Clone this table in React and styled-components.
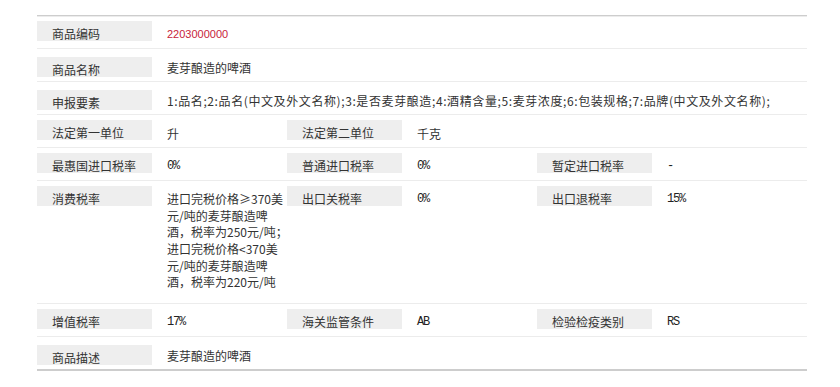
import React from 'react'
import styled, { createGlobalStyle, css } from 'styled-components'

const GlobalStyle = createGlobalStyle`
  body {
    margin: 0;
    background: #fff;
    font-family: "Noto Sans CJK SC", "Noto Sans", sans-serif;
    color: #333;
  }
`

const Page = styled.div`
  padding: 15px 0 0 37px;
`

const Table = styled.div`
  width: 770px;
  border-top: 1px solid #cdcdcd;
  border-bottom: 2px solid #cdcdcd;
  box-shadow: inset 0 1px 0 #ececec;
`

const Row = styled.div`
  display: grid;
  grid-template-columns: 115px 135px 115px 135px 115px 155px;
  align-items: start;
  min-height: 32px;
  & + & {
    border-top: 1px solid #ececec;
  }
`

// grey label chip; text sits a little below the middle of the chip
const Label = styled.div`
  box-sizing: border-box;
  height: 20px;
  margin-top: ${p => (p.$low ? 8 : 5)}px;
  padding: 6px 0 0 15px;
  background: #eeeeee;
  font-size: 12px;
  line-height: 14px;
  white-space: nowrap;
`

const Value = styled.div`
  padding: 10px 0 ${p => (p.$multi ? 12 : 0)}px 15px;
  font-size: 12px;
  line-height: ${p => (p.$multi ? '16.67px' : '17px')};
  white-space: nowrap;
  ${p => p.$span && css`grid-column: span ${p.$span};`}
  ${p => p.$wide && css`letter-spacing: 0.6px;`}
  ${p => p.$code && css`
    font-family: "Liberation Sans", Arial, sans-serif;
    font-size: 11px;
    color: #c8223a;
  `}
  ${p => p.$mono && css`
    font-family: "Liberation Mono", "Courier New", monospace;
    font-size: 12px;
    letter-spacing: -1.2px;
    color: #222;
  `}
`

const Line = styled.span`
  display: block;
`

const consumptionTax = [
  '进口完税价格≥370美',
  '元/吨的麦芽酿造啤',
  '酒，税率为250元/吨；',
  '进口完税价格<370美',
  '元/吨的麦芽酿造啤',
  '酒，税率为220元/吨',
]

export default function App() {
  return (
    <Page>
      <GlobalStyle />
      <Table>
        <Row>
          <Label>商品编码</Label>
          <Value $span={5} $code>2203000000</Value>
        </Row>
        <Row>
          <Label $low>商品名称</Label>
          <Value $span={5}>麦芽酿造的啤酒</Value>
        </Row>
        <Row>
          <Label $low>申报要素</Label>
          <Value $span={5} $wide>
            1:品名;2:品名(中文及外文名称);3:是否麦芽酿造;4:酒精含量;5:麦芽浓度;6:包装规格;7:品牌(中文及外文名称);
          </Value>
        </Row>
        <Row>
          <Label>法定第一单位</Label>
          <Value>升</Value>
          <Label>法定第二单位</Label>
          <Value $span={3}>千克</Value>
        </Row>
        <Row>
          <Label>最惠国进口税率</Label>
          <Value $mono>0%</Value>
          <Label>普通进口税率</Label>
          <Value $mono>0%</Value>
          <Label>暂定进口税率</Label>
          <Value $mono>-</Value>
        </Row>
        <Row>
          <Label>消费税率</Label>
          <Value $multi>
            {consumptionTax.map((t, i) => (
              <Line key={i}>{t}</Line>
            ))}
          </Value>
          <Label>出口关税率</Label>
          <Value $mono>0%</Value>
          <Label>出口退税率</Label>
          <Value $mono>15%</Value>
        </Row>
        <Row>
          <Label>增值税率</Label>
          <Value $mono>17%</Value>
          <Label>海关监管条件</Label>
          <Value $mono>AB</Value>
          <Label>检验检疫类别</Label>
          <Value $mono>RS</Value>
        </Row>
        <Row>
          <Label $low>商品描述</Label>
          <Value $span={5}>麦芽酿造的啤酒</Value>
        </Row>
      </Table>
    </Page>
  )
}
